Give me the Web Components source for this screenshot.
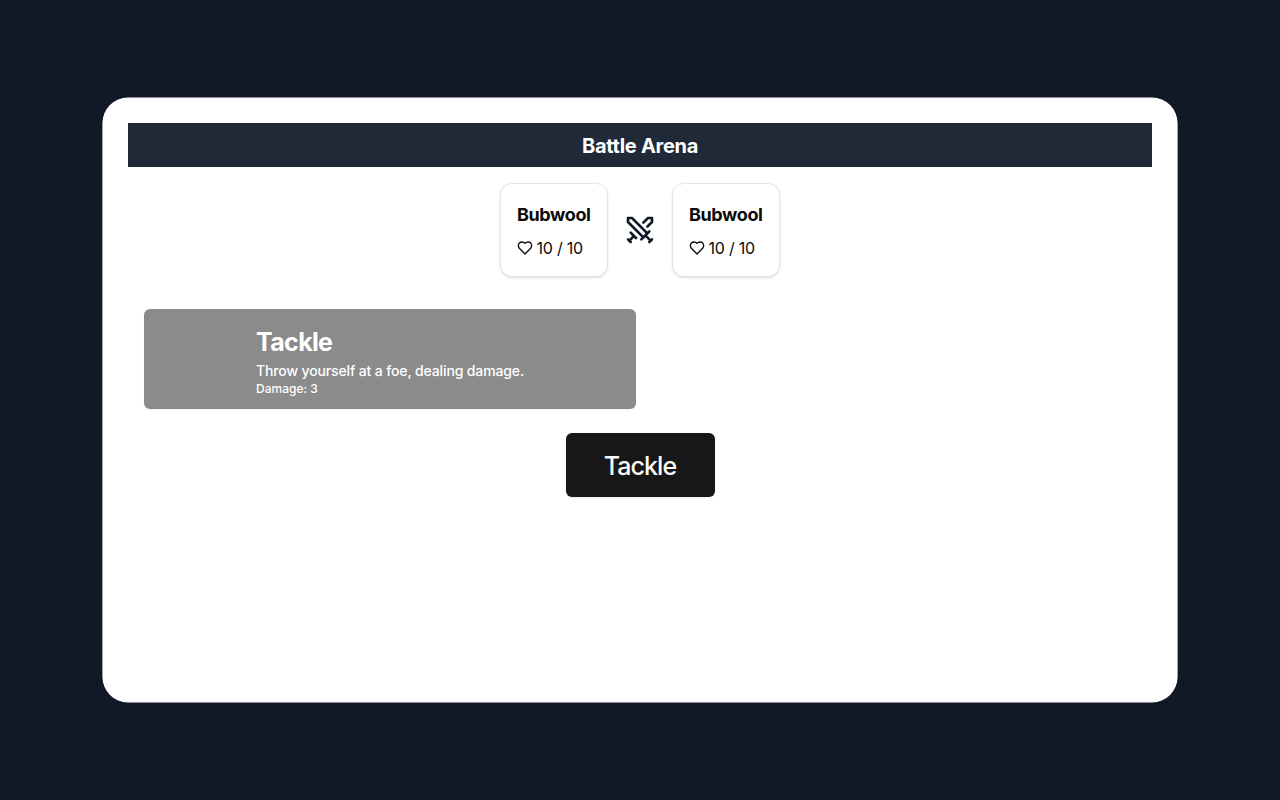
<!DOCTYPE html>
<html lang="en">
<head>
<meta charset="utf-8">
<title>Battle Arena</title>
<style>
html, body { margin: 0; height: 100%; }
body { font-family: Inter, "Liberation Sans", sans-serif; background: #111827; color: #0a0a0a; }
</style>
</head>
<body>
<battle-arena>
  <arena-header>Battle Arena</arena-header>
  <battle-field>
    <fighter-card name="Bubwool" hp="10" max="10"></fighter-card>
    <crossed-swords></crossed-swords>
    <fighter-card name="Bubwool" hp="10" max="10"></fighter-card>
  </battle-field>
  <move-list>
    <move-card name="Tackle" damage="3">Throw yourself at a foe, dealing damage.</move-card>
  </move-list>
  <confirm-button>Tackle</confirm-button>
</battle-arena>
<script>
class Base extends HTMLElement {
  connectedCallback() {
    if (!this.shadowRoot) this.attachShadow({ mode: "open" }).innerHTML = this.render();
  }
}
const define = (tag, render) => customElements.define(tag, class extends Base {
  render() { return render(this); }
});

define("battle-arena", () => `
  <style>
    :host { display: flex; box-sizing: border-box; height: 100%; padding: 97px 102px; }
    main { flex: 1; display: flex; flex-direction: column; box-sizing: border-box; padding: 26px; clip-path: inset(0.6px 0.4px round 25.6px); background: #fff; }
  </style>
  <main><slot></slot></main>`);

define("arena-header", () => `
  <style>
    :host { display: block; background: #1f2937; color: #fff; padding: 9px 8px 7px; text-align: center; }
    h1 { margin: 0; font-size: 20px; line-height: 28px; font-weight: 700; letter-spacing: -0.28px; }
  </style>
  <h1><slot></slot></h1>`);

define("battle-field", () => `
  <style>:host { display: flex; justify-content: center; align-items: center; gap: 16px; padding: 16px; }</style>
  <slot></slot>`);

define("fighter-card", el => `
  <style>
    :host { display: block; box-sizing: border-box; width: 108px; height: 94px; padding: 17px 16px 15px; border: 1px solid #e5e5e5; border-radius: 12px; background: #fff; box-shadow: 0 1px 3px rgba(0,0,0,.1), 0 1px 2px -1px rgba(0,0,0,.1); white-space: nowrap; }
    h2 { margin: 0; font-size: 18px; line-height: 28px; font-weight: 700; letter-spacing: -0.38px; }
    p { margin: 7px 0 0; display: flex; align-items: center; gap: 3.5px; font-size: 16px; line-height: 24px; letter-spacing: -0.22px; }
    svg { flex: none; }
  </style>
  <h2>${el.getAttribute("name")}</h2>
  <p><svg width="16" height="16" viewBox="0 0 24 24" fill="none" stroke="currentColor" stroke-width="2" stroke-linecap="round" stroke-linejoin="round"><path d="M19 14c1.49-1.46 3-3.21 3-5.5A5.5 5.5 0 0 0 16.5 3c-1.76 0-3 .5-4.5 2-1.5-1.5-2.74-2-4.5-2A5.5 5.5 0 0 0 2 8.5c0 2.3 1.5 4.05 3 5.5l7 7Z"/></svg><span>${el.getAttribute("hp")} / ${el.getAttribute("max")}</span></p>`);

define("crossed-swords", () => `
  <style>:host { display: block; width: 32px; height: 32px; color: #111827; } svg { display: block; }</style>
  <svg width="32" height="32" viewBox="0 0 24 24" fill="none" stroke="currentColor" stroke-width="2" stroke-linecap="round" stroke-linejoin="round"><polyline points="14.5 17.5 3 6 3 3 6 3 17.5 14.5"/><line x1="13" x2="19" y1="19" y2="13"/><line x1="16" x2="20" y1="16" y2="20"/><line x1="19" x2="21" y1="21" y2="19"/><polyline points="14.5 6.5 18 3 21 3 21 6 17.5 9.5"/><line x1="5" x2="9" y1="14" y2="18"/><line x1="7" x2="4" y1="17" y2="20"/><line x1="3" x2="5" y1="19" y2="21"/></svg>`);

define("move-list", () => `
  <style>:host { display: grid; grid-template-columns: 1fr 1fr; gap: 8px; padding: 16px; }</style>
  <slot></slot>`);

define("move-card", el => `
  <style>
    :host { display: flex; justify-content: center; align-items: center; box-sizing: border-box; height: 100px; border-radius: 6px; background: #8b8b8b; color: #fff; box-shadow: 0 1px 2px rgba(0,0,0,.05); white-space: nowrap; }
    div { width: 268px; padding-top: 5px; }
    h3 { margin: 0 0 3px; font-size: 25px; line-height: 32px; font-weight: 700; letter-spacing: -0.65px; }
    p { margin: 0; font-size: 14px; line-height: 20px; font-weight: 500; letter-spacing: -0.13px; }
    small { display: block; margin-top: -1px; padding-top: 1px; font-size: 12px; line-height: 16px; font-weight: 500; }
  </style>
  <div><h3>${el.getAttribute("name")}</h3><p><slot></slot></p><small>Damage: ${el.getAttribute("damage")}</small></div>`);

define("confirm-button", () => `
  <style>
    :host { display: flex; justify-content: center; padding-top: 8px; }
    button { width: 149px; height: 64px; padding: 2px 0 0; border: 0; border-radius: 6px; background: #171717; color: #fafafa; font: 500 25px/32px Inter, "Liberation Sans", sans-serif; letter-spacing: -0.95px; box-shadow: 0 1px 2px rgba(0,0,0,.08); }
  </style>
  <button type="button"><slot></slot></button>`);
</script>
</body>
</html>
